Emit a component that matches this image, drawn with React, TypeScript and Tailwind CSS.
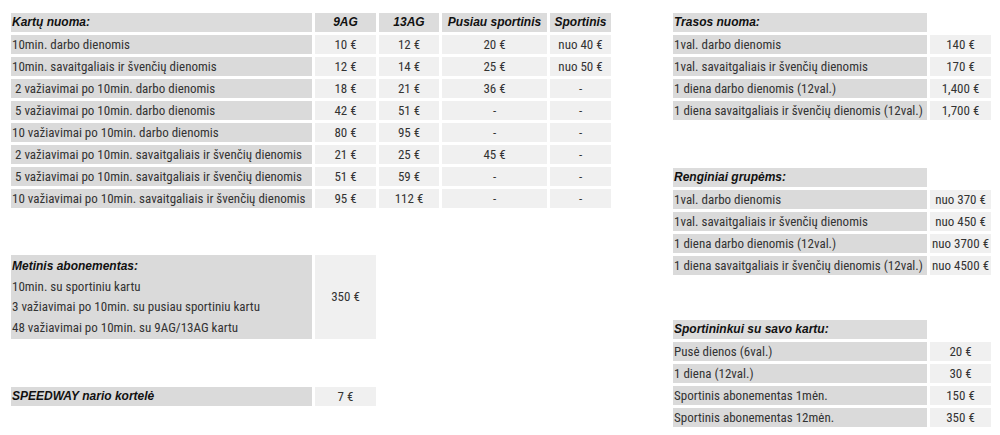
import React from "react";

const font = "font-['Liberation_Sans_Narrow','Roboto_Condensed','DejaVu_Sans_Condensed',sans-serif]";
const headFont = "font-['Liberation_Sans',Arial,sans-serif] text-[12px] font-bold italic text-[#111]";

const kartu = [
  ["10min. darbo dienomis", "10 €", "12 €", "20 €", "nuo 40 €"],
  ["10min. savaitgaliais ir švenčių dienomis", "12 €", "14 €", "25 €", "nuo 50 €"],
  ["\u00a02 važiavimai po 10min. darbo dienomis", "18 €", "21 €", "36 €", "-"],
  ["\u00a05 važiavimai po 10min. darbo dienomis", "42 €", "51 €", "-", "-"],
  ["10 važiavimai po 10min. darbo dienomis", "80 €", "95 €", "-", "-"],
  ["\u00a02 važiavimai po 10min. savaitgaliais ir švenčių dienomis", "21 €", "25 €", "45 €", "-"],
  ["\u00a05 važiavimai po 10min. savaitgaliais ir švenčių dienomis", "51 €", "59 €", "-", "-"],
  ["10 važiavimai po 10min. savaitgaliais ir švenčių dienomis", "95 €", "112 €", "-", "-"],
];

const trasos = [
  ["1val. darbo dienomis", "140 €"],
  ["1val. savaitgaliais ir švenčių dienomis", "170 €"],
  ["1 diena darbo dienomis (12val.)", "1,400 €"],
  ["1 diena savaitgaliais ir švenčių dienomis (12val.)", "1,700 €"],
];

const renginiai = [
  ["1val. darbo dienomis", "nuo 370 €"],
  ["1val. savaitgaliais ir švenčių dienomis", "nuo 450 €"],
  ["1 diena darbo dienomis (12val.)", "nuo 3700 €"],
  ["1 diena savaitgaliais ir švenčių dienomis (12val.)", "nuo 4500 €"],
];

const sportininkai = [
  ["Pusė dienos (6val.)", "20 €"],
  ["1 diena (12val.)", "30 €"],
  ["Sportinis abonementas 1mėn.", "150 €"],
  ["Sportinis abonementas 12mėn.", "350 €"],
];

const headBase = `bg-[#dcdcdc] h-[19px] p-0 leading-[19px] whitespace-nowrap ${headFont}`;
const headLeft = `${headBase} pl-[1px] text-left`;
const headMid = `${headBase} text-center`;
const labelCell = "bg-[#dadada] h-[19px] p-0 pl-[1px] text-left leading-[19px] whitespace-nowrap";
const valCell = "bg-[#f0f0f0] h-[19px] p-0 text-center leading-[19px] whitespace-nowrap";

function SideTable({ title, rows, className = "" }: { title: string; rows: string[][]; className?: string }) {
  return (
    <table className={`table-fixed border-separate border-spacing-[3px] w-[324px] ${className}`}>
      <colgroup>
        <col className="w-[254px]" />
        <col className="w-[61px]" />
      </colgroup>
      <tbody>
        <tr>
          <th className={headLeft}>{title}</th>
          <th className="p-0"></th>
        </tr>
        {rows.map(r => (
          <tr key={r[0]}>
            <td className={labelCell}>{r[0]}</td>
            <td className={valCell}>{r[1]}</td>
          </tr>
        ))}
      </tbody>
    </table>
  );
}

export default function App() {
  return (
    <div className={`${font} text-[13px] text-[#333] bg-white w-[1000px] h-[435px] flex gap-[56px] pl-[8px] pt-[10px]`}>
      <div className="flex flex-col">
        <table className="table-fixed border-separate border-spacing-[3px] w-[606px]">
          <colgroup>
            <col className="w-[301px]" />
            <col className="w-[61px]" />
            <col className="w-[60px]" />
            <col className="w-[105px]" />
            <col className="w-[61px]" />
          </colgroup>
          <thead>
            <tr>
              <th className={headLeft}>Kartų nuoma:</th>
              <th className={headMid}>9AG</th>
              <th className={headMid}>13AG</th>
              <th className={headMid}>Pusiau sportinis</th>
              <th className={headMid}>Sportinis</th>
            </tr>
          </thead>
          <tbody>
            {kartu.map(r => (
              <tr key={r[0]}>
                <td className={labelCell}>{r[0]}</td>
                <td className={valCell}>{r[1]}</td>
                <td className={valCell}>{r[2]}</td>
                <td className={valCell}>{r[3]}</td>
                <td className={valCell}>{r[4]}</td>
              </tr>
            ))}
          </tbody>
        </table>

        <table className="table-fixed border-separate border-spacing-[3px] w-[371px] mt-[41px]">
          <colgroup>
            <col className="w-[301px]" />
            <col className="w-[61px]" />
          </colgroup>
          <tbody>
            <tr>
              <td className="bg-[#dadada] p-0 pl-[1px] py-px leading-[20.5px]">
                <div className={headFont}>Metinis abonementas:</div>
                <div>10min. su sportiniu kartu</div>
                <div>3 važiavimai po 10min. su pusiau sportiniu kartu</div>
                <div>48 važiavimai po 10min. su 9AG/13AG kartu</div>
              </td>
              <td className="bg-[#f0f0f0] p-0 text-center align-middle">350 €</td>
            </tr>
          </tbody>
        </table>

        <table className="table-fixed border-separate border-spacing-[3px] w-[371px] mt-[42px]">
          <colgroup>
            <col className="w-[301px]" />
            <col className="w-[61px]" />
          </colgroup>
          <tbody>
            <tr>
              <td className={`bg-[#dadada] h-[19px] p-0 pl-[1px] leading-[19px] ${headFont}`}>SPEEDWAY nario kortelė</td>
              <td className={valCell}>7 €</td>
            </tr>
          </tbody>
        </table>
      </div>

      <div className="flex flex-col">
        <SideTable title="Trasos nuoma:" rows={trasos} />
        <SideTable title="Renginiai grupėms:" rows={renginiai} className="mt-[42px]" />
        <SideTable title="Sportininkui su savo kartu:" rows={sportininkai} className="mt-[39px]" />
      </div>
    </div>
  );
}
